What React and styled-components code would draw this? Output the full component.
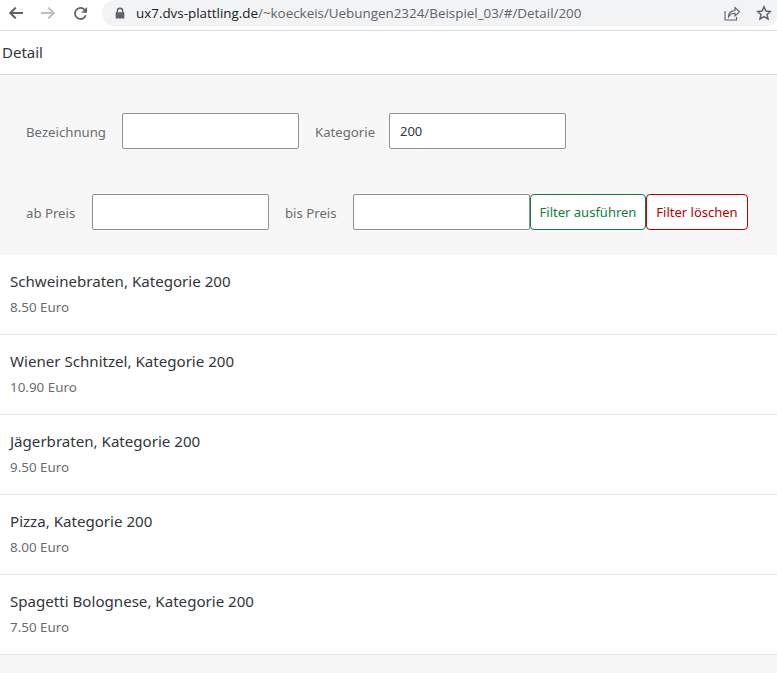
import React from "react";
import styled, { createGlobalStyle } from "styled-components";

const Global = createGlobalStyle`
  html, body { margin: 0; padding: 0; background: #f7f7f7; }
  body { font-family: "Noto Sans", "Open Sans", Arial, sans-serif; }
  * { box-sizing: border-box; }
`;

const Page = styled.div`
  width: 777px;
  height: 673px;
  overflow: hidden;
  background: #f7f7f7;
`;

const BrowserBar = styled.div`
  height: 31px;
  display: flex;
  align-items: flex-start;
  background: #fff;
  border-bottom: 1px solid #dcdcdc;
`;

const NavGroup = styled.div`
  width: 102px;
  height: 26px;
  flex: none;
  display: flex;
  align-items: center;
  gap: 18px;
  padding-left: 9px;
`;

const AddressBar = styled.div`
  flex: 1;
  height: 26px;
  display: flex;
  align-items: center;
  background: #f1f3f4;
  border-radius: 13px 0 10px 13px;
  padding-left: 13px;
  padding-right: 5px;
`;

const Url = styled.div`
  margin-left: 11px;
  flex: 1;
  font-family: "Open Sans", sans-serif;
  font-size: 13.4px;
  color: #5f6368;
  white-space: nowrap;
  b { font-weight: 400; color: #202124; }
`;

const BarActions = styled.div`
  display: flex;
  align-items: center;
  gap: 16px;
`;

const Header = styled.div`
  height: 44px;
  display: flex;
  align-items: center;
  padding: 0 0 2px 2px;
  background: #fff;
  border-bottom: 1px solid #d9d9d9;
  font-size: 15px;
  color: #32363a;
`;

const FilterBar = styled.div`
  height: 180px;
  padding: 38px 0 25px 26px;
  display: flex;
  flex-direction: column;
  gap: 45px;
  background: #f7f7f7;
`;

const FilterRow = styled.div`
  display: flex;
  align-items: center;
  height: 36px;
`;

const Label = styled.label`
  font-size: 13.2px;
  color: #6a6d70;
  margin-right: 16px;
  margin-top: 2px;
  white-space: nowrap;
  width: ${(p) => p.$w}px;
`;

const Input = styled.input`
  width: 177px;
  height: 36px;
  flex: none;
  padding: 0 10px;
  margin-right: ${(p) => p.$mr ?? 16}px;
  border: 1px solid #89919a;
  border-radius: 2px;
  background: #fff;
  font-family: inherit;
  font-size: 13px;
  color: #32363a;
  outline: none;
`;

const FilterButton = styled.button`
  height: 36px;
  width: ${(p) => p.$w}px;
  flex: none;
  padding: 0;
  border: 1px solid ${(p) => p.$color};
  border-radius: 4px;
  background: #fff;
  font-family: inherit;
  font-size: 13px;
  color: ${(p) => p.$color};
`;

const List = styled.ul`
  list-style: none;
  margin: 0;
  padding: 0;
  background: #fff;
`;

const Item = styled.li`
  height: 80px;
  padding: 16px 10px 0;
  border-bottom: 1px solid #e5e5e5;
`;

const Title = styled.div`
  font-size: 15.1px;
  line-height: 21px;
  color: #32363a;
`;

const Price = styled.div`
  margin-top: 6px;
  font-size: 13.4px;
  line-height: 18px;
  color: #6a6d70;
`;

const items = [
  ["Schweinebraten, Kategorie 200", "8.50 Euro"],
  ["Wiener Schnitzel, Kategorie 200", "10.90 Euro"],
  ["Jägerbraten, Kategorie 200", "9.50 Euro"],
  ["Pizza, Kategorie 200", "8.00 Euro"],
  ["Spagetti Bolognese, Kategorie 200", "7.50 Euro"],
];

const Arrow = ({ color, flip }) => (
  <svg width="14" height="12" viewBox="0 0 14 12" fill="none" stroke={color} strokeWidth="2"
    style={flip ? { transform: "scaleX(-1)" } : undefined}>
    <path d="M14 6H1.500M6.800.6 1.300 6l5.500 5.400" />
  </svg>
);

export default function App() {
  return (
    <Page>
      <Global />
      <BrowserBar>
        <NavGroup>
          <Arrow color="#5f6368" />
          <Arrow color="#bdc1c6" flip />
          <svg width="15" height="15" viewBox="0 0 16 16" fill="none">
            <path d="M13.6 9.800A5.900 5.900 0 1 1 12.400 4" stroke="#5f6368" strokeWidth="1.900" />
            <path d="M15 1v6.200H8.800z" fill="#5f6368" />
          </svg>
        </NavGroup>
        <AddressBar>
          <svg width="10" height="12" viewBox="0 0 12 14">
            <path d="M2 6V4.400a4 4 0 0 1 8 0V6h1.200v7.600H.8V6zm1.700 0h4.600V4.400a2.300 2.300 0 0 0-4.600 0z" fill="#5f6368" />
          </svg>
          <Url>
            <b>ux7.dvs-plattling.de</b>/~koeckeis/Uebungen2324/Beispiel_03/#/Detail/200
          </Url>
          <BarActions>
            <svg width="16" height="16" viewBox="0 0 16 16" fill="none" stroke="#5f6368" strokeWidth="1.100">
              <path d="M1 6v9h11.500v-3" />
              <path d="M4.500 12c0-4 2.500-6.500 6.500-6.500V2.500l4.500 4.300-4.500 4.200V8.300c-3 0-5 1-6.500 3.700z" />
            </svg>
            <svg width="16" height="16" viewBox="0 0 16 16" fill="none" stroke="#5f6368" strokeWidth="1.500">
              <path d="m8 1.800 1.900 4.200 4.500.5-3.400 3 1 4.500L8 11.700 4 14l1-4.500-3.400-3 4.500-.5z" />
            </svg>
          </BarActions>
        </AddressBar>
      </BrowserBar>
      <Header>Detail</Header>
      <FilterBar>
        <FilterRow>
          <Label $w={80}>Bezeichnung</Label>
          <Input />
          <Label $w={58}>Kategorie</Label>
          <Input defaultValue="200" />
        </FilterRow>
        <FilterRow>
          <Label $w={50}>ab Preis</Label>
          <Input />
          <Label $w={52}>bis Preis</Label>
          <Input $mr={0} />
          <FilterButton $w={116} $color="#107e3e">Filter ausführen</FilterButton>
          <FilterButton $w={102} $color="#bb0000">Filter löschen</FilterButton>
        </FilterRow>
      </FilterBar>
      <List>
        {items.map(([title, price]) => (
          <Item key={title}>
            <Title>{title}</Title>
            <Price>{price}</Price>
          </Item>
        ))}
      </List>
    </Page>
  );
}
